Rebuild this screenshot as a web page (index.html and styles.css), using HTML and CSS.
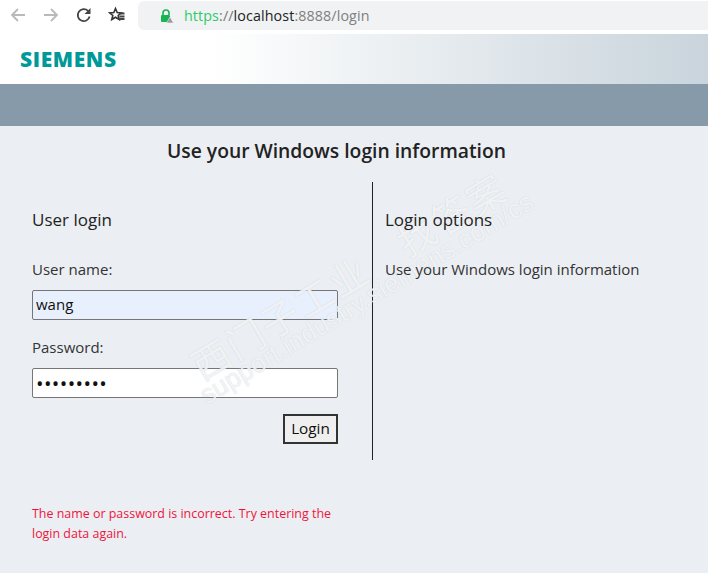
FILE: index.html
```html
<!DOCTYPE html>
<html lang="en">
<head>
<meta charset="utf-8">
<title>Login</title>
<link rel="stylesheet" href="styles.css">
</head>
<body>
<div class="chrome">
  <div class="nav">
    <svg class="ico" width="18" height="18" viewBox="0 0 18 18"><path d="M16 9H3M9 3 3 9l6 6" class="st grey"/></svg>
    <svg class="ico" width="18" height="18" viewBox="0 0 18 18"><path d="M2 9h13M9 3l6 6-6 6" class="st grey"/></svg>
    <svg class="ico" width="18" height="18" viewBox="0 0 18 18"><path d="M14.600 10.500A6 6 0 1 1 13 4.800" class="st dark"/><path d="M15.500 2v6h-6z" class="fill"/></svg>
    <svg class="ico" width="18" height="18" viewBox="0 0 18 18"><path d="M7.500 2.500 9.200 6.600l4 .3-3 2.600 1 4-3.700-2.200L3.800 13.500l1-4-3-2.600 4-.3z" class="star"/><path d="M11 7.500h5.500M11.500 10.500h5M11.500 13h5" class="st dark"/></svg>
  </div>
  <div class="omni">
    <svg class="lock" width="14" height="14" viewBox="0 0 14 14"><path d="M3 6V4a3 3 0 0 1 6 0v2" class="shackle"/><rect x="1" y="6" width="9" height="7" rx="1" class="lockbody"/><path d="M10 8l3.500 6h-7z" class="warn"/></svg>
    <span class="url"><span class="scheme">https</span><span class="sep">://</span><span class="host">localhost</span><span class="rest">:8888/login</span></span>
  </div>
</div>
<header class="brand"><span class="logo">SIEMENS</span></header>
<div class="band"></div>
<main class="main">
  <h1 class="title">Use your Windows login information</h1>
  <div class="columns">
    <form class="left">
      <h2 class="heading">User login</h2>
      <label class="label" for="u">User name:</label>
      <input class="field filled" id="u" type="text" value="wang">
      <label class="label pw" for="p">Password:</label>
      <input class="field dots" id="p" type="password" value="123456789">
      <div class="actions"><button class="btn" type="button">Login</button></div>
    </form>
    <section class="right">
      <h2 class="heading">Login options</h2>
      <p class="info">Use your Windows login information</p>
    </section>
  </div>
  <p class="error">The name or password is incorrect. Try entering the login data again.</p>
  <div class="wm" aria-hidden="true">
    <div class="wm-cn">西门子工业　找答案</div>
    <div class="wm-en">support.industry.siemens.com/cs</div>
  </div>
</main>
</body>
</html>
```

FILE: styles.css
```css
* { box-sizing: border-box; }
html, body { margin: 0; height: 100%; }
body {
  width: 708px;
  height: 573px;
  overflow: hidden;
  background: #ebeff3;
  color: #222;
  font-family: "Open Sans", "Noto Sans", "Noto Sans CJK SC", sans-serif;
  display: flex;
  flex-direction: column;
}
.chrome {
  height: 34px;
  background: #fff;
  display: flex;
  align-items: flex-start;
  flex: none;
}
.nav {
  display: flex;
  gap: 15px;
  padding: 6px 0 0 9px;
  width: 138px;
}
.ico { display: block; flex: none; }
.st { fill: none; stroke-width: 1.8; }
.grey { stroke: #b9b9b9; }
.dark { stroke: #444; }
.fill { fill: #444; }
.star { fill: #fff; stroke: #333; stroke-width: 1.600; }
.omni {
  flex: 1;
  height: 29px;
  margin-top: 1px;
  background: #f1f2f3;
  border-radius: 6px 0 0 6px;
  display: flex;
  align-items: center;
  padding-left: 22px;
}
.lock { margin-right: 10px; flex: none; }
.shackle { fill: none; stroke: #17b455; stroke-width: 1.600; }
.lockbody { fill: #17b455; }
.warn { fill: #9a9a9a; stroke: #f1f2f3; stroke-width: .6; }
.url { font-size: 14.300px; letter-spacing: .1px; }
.scheme { color: #2ecb6c; }
.sep { color: #777; }
.host { color: #222; }
.rest { color: #808080; }
.brand {
  height: 50px;
  flex: none;
  background: linear-gradient(90deg, #fff 30%, #c9d4dc 100%);
  display: flex;
  align-items: center;
  padding: 0 0 0 20px;
}
.logo {
  color: #009999;
  font-family: "Open Sans", sans-serif;
  font-weight: 800;
  font-size: 21px;
  letter-spacing: .6px;
  line-height: 1;
}
.band { height: 42px; flex: none; background: #879aaa; }
.main { position: relative; flex: 1; overflow: hidden; }
.title {
  width: 673px;
  margin: 0;
  padding-top: 12px;
  height: 56px;
  text-align: center;
  font-size: 19.300px;
  font-weight: 600;
  line-height: 26px;
  color: #222;
}
.columns { display: flex; height: 278px; }
.left {
  width: 373px;
  padding: 26px 34px 0 32px;
  border-right: 1px solid #222;
  display: flex;
  flex-direction: column;
}
.right { padding: 26px 0 0 12px; flex: 1; }
.heading {
  position: relative;
  z-index: 2;
  margin: 0;
  font-size: 17px;
  font-weight: 400;
  line-height: 24px;
}
.label {
  display: block;
  margin-top: 26px;
  font-size: 15px;
  line-height: 22px;
  color: #333;
}
.label.pw { margin-top: 16px; }
.field {
  display: block;
  width: 306px;
  height: 30px;
  margin-top: 10px;
  padding: 0 3px 2px;
  background: #fff;
  border: 1px solid #767676;
  border-radius: 2px;
  font: 15px "Open Sans", sans-serif;
  color: #111;
  outline: none;
}
.filled { background: #e8f0fe; }
.dots { font-size: 20px; letter-spacing: .4px; padding-bottom: 0; }
.actions { display: flex; justify-content: flex-end; margin-top: 16px; }
.btn {
  width: 55px;
  height: 30px;
  padding: 0 0 2px;
  background: #efefef;
  border: 2px solid #333;
  border-radius: 0;
  font: 15.300px "Open Sans", sans-serif;
  color: #111;
}
.info {
  position: relative;
  z-index: 2;
  margin: 26px 0 0;
  font-size: 15px;
  line-height: 22px;
  color: #333;
}
.error {
  width: 310px;
  margin: 44px 0 0 32px;
  font-size: 12.450px;
  line-height: 20px;
  color: #f0143c;
}
.wm {
  position: absolute;
  z-index: 1;
  left: 202px;
  top: 271px;
  transform: rotate(-31deg);
  transform-origin: 0 0;
  white-space: nowrap;
  pointer-events: none;
}
.wm-cn {
  position: absolute;
  left: 8px;
  top: -51px;
  font-family: "Noto Sans CJK SC", sans-serif;
  font-size: 38px;
  line-height: 44px;
  letter-spacing: 2px;
  color: rgba(255, 255, 255, .75);
  text-shadow: 0 0 1px rgba(175, 185, 195, .7);
}
.wm-en {
  position: absolute;
  left: 0;
  top: -15px;
  font-family: "Liberation Sans", sans-serif;
  font-size: 26.500px;
  line-height: 30px;
  color: rgba(255, 255, 255, .75);
  text-shadow: 0 0 1px rgba(175, 185, 195, .7);
}
```
